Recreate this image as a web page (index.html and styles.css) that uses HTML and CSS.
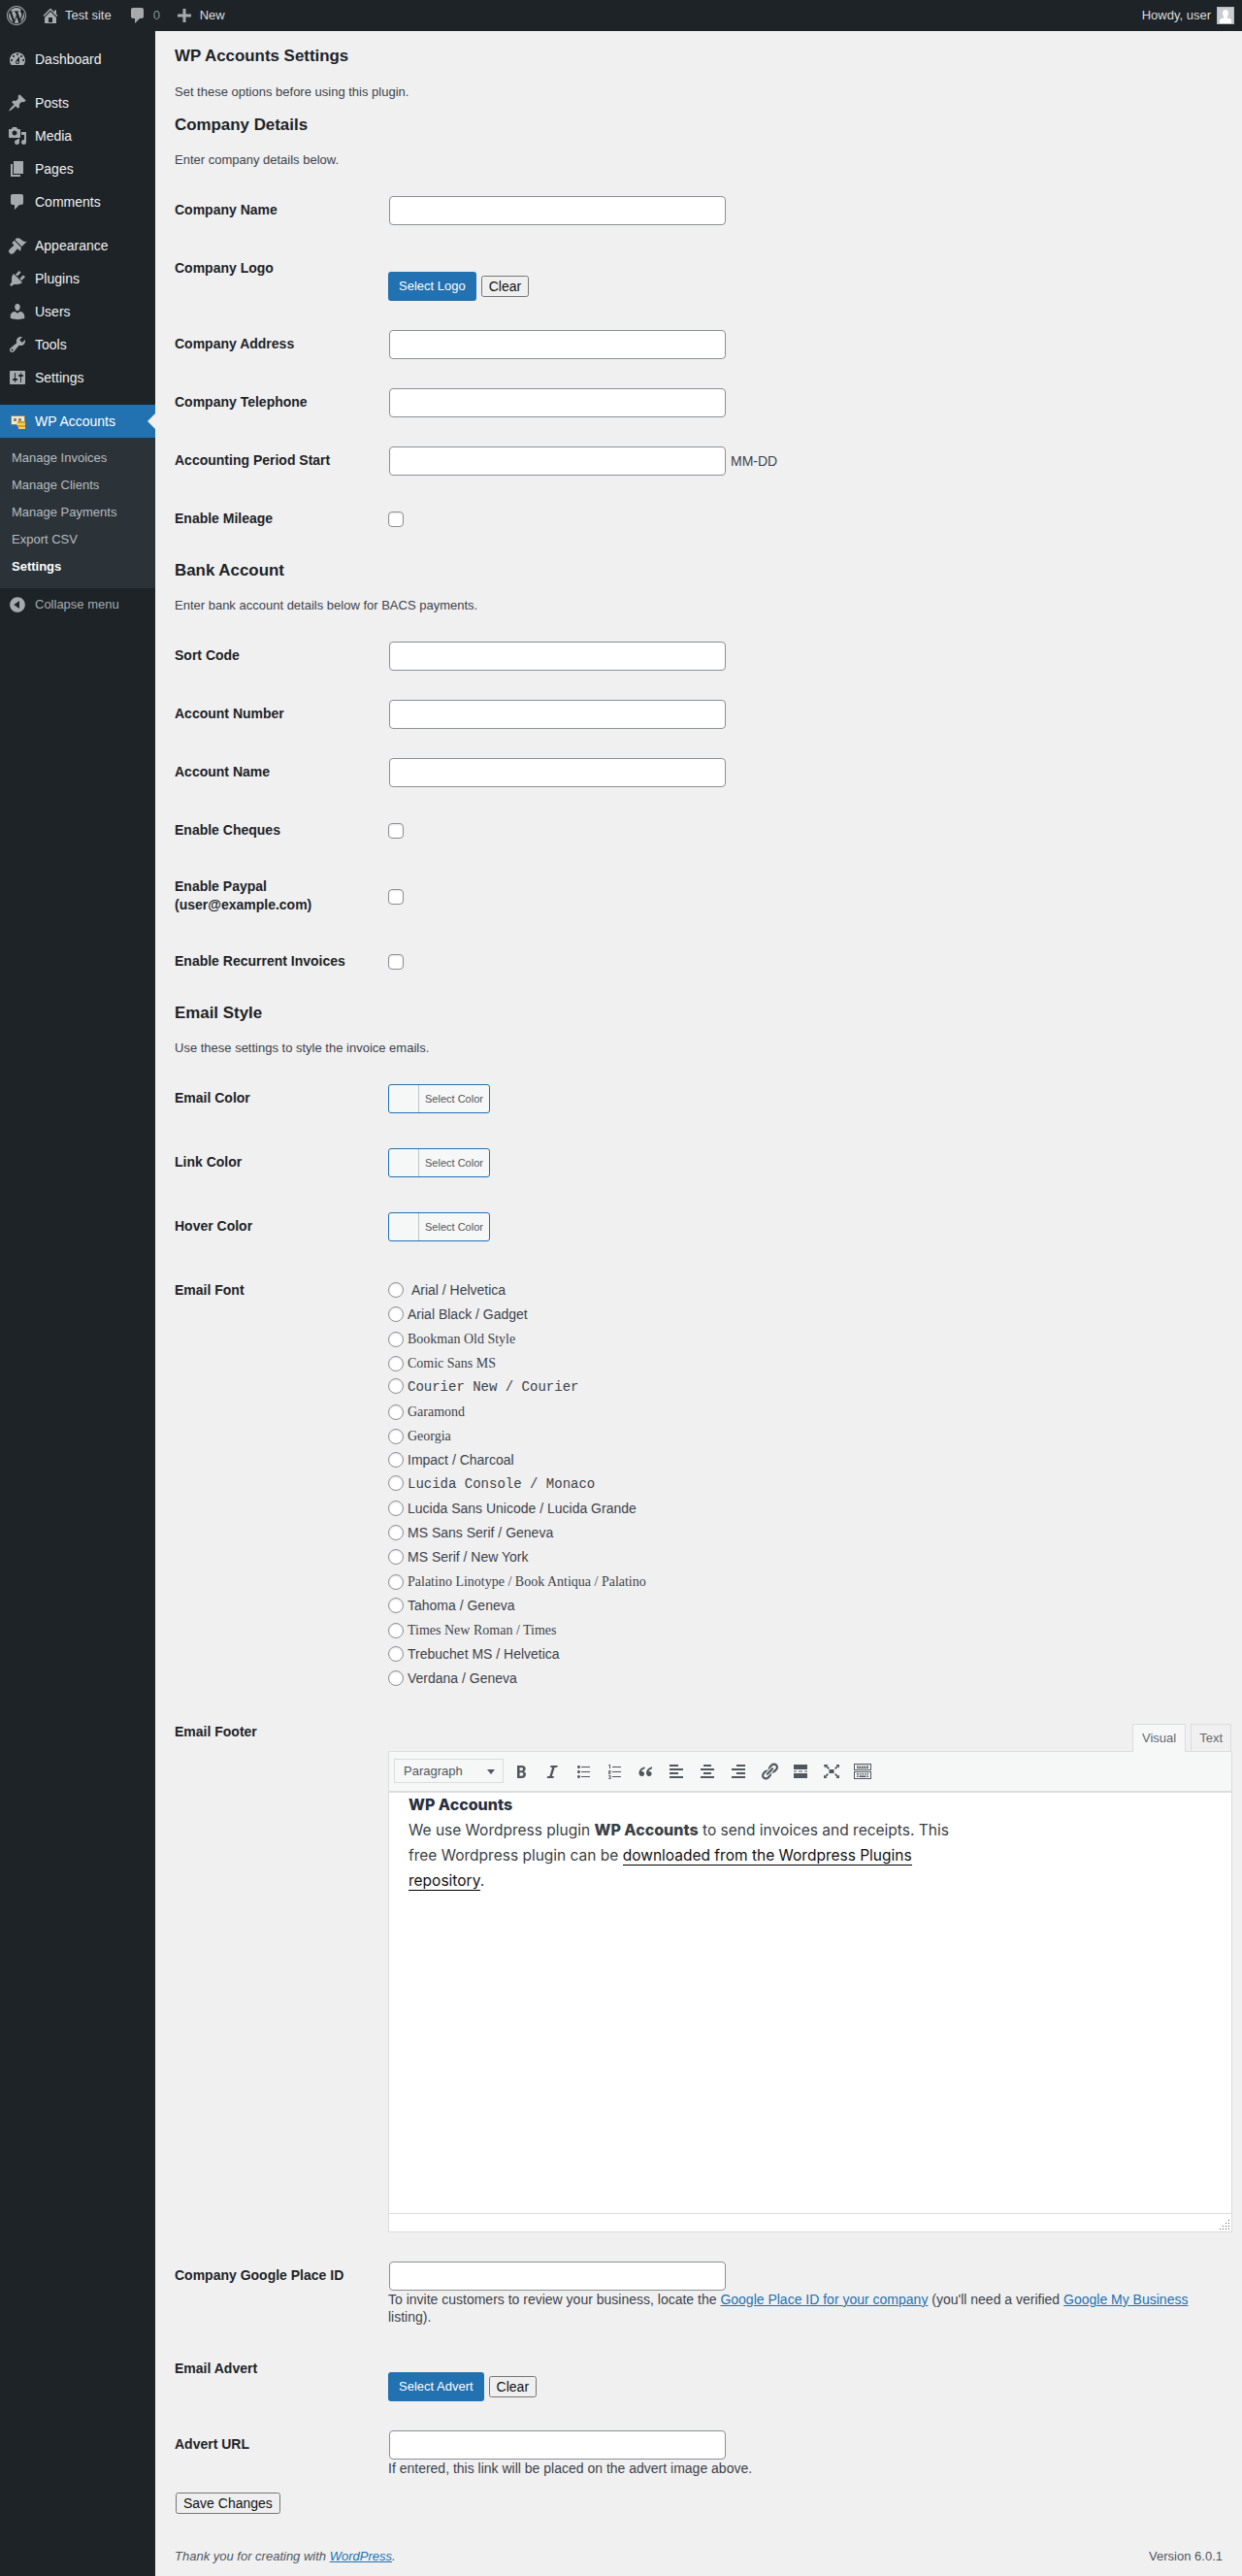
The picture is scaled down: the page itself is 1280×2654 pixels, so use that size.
FILE: index.html
```html
<!DOCTYPE html>
<html lang="en">
<head>
<meta charset="utf-8">
<title>WP Accounts Settings</title>
<link rel="stylesheet" href="styles.css">
</head>
<body>
<header class="topbar">
  <div class="bar-group">
    <span class="bar-logo"><svg class="ico-20" viewBox="0 0 20 20"><path d="M20 10c0-5.52-4.48-10-10-10S0 4.48 0 10s4.48 10 10 10 10-4.48 10-10zM10 1.01c4.97 0 8.99 4.02 8.99 8.99s-4.02 8.99-8.99 8.99S1.01 14.97 1.01 10 5.03 1.01 10 1.01zM8.01 14.82L4.96 6.61c.49-.03 1.05-.08 1.05-.08.43-.05.38-1.01-.06-.99 0 0-1.29.1-2.13.1-.15 0-.33 0-.52-.01 1.44-2.17 3.9-3.6 6.7-3.6 2.09 0 3.99.79 5.41 2.09-.6-.1-1.45.35-1.45 1.36 0 .63.38 1.16.77 1.79.3.53.47 1.18.47 2.13 0 1.29-1.21 4.32-1.21 4.32l-2.62-7.24c.47-.03.72-.16.72-.16.43-.04.38-1.08-.05-1.05 0 0-1.25.11-2.06.11-.76 0-2.04-.11-2.04-.11-.44-.03-.49 1.03-.06 1.05l.81.08 1.13 3.06-1.58 4.77zm6.02 2.15L16.64 10s.67-1.69.39-3.81c.63 1.14.94 2.42.94 3.81 0 2.96-1.56 5.58-3.94 6.97zM2.68 6.77L6.5 17.25c-2.67-1.3-4.47-4.08-4.47-7.25 0-1.16.2-2.23.65-3.23zm7.45 4.53l2.29 6.25c-.75.27-1.57.42-2.42.42-.72 0-1.41-.11-2.06-.3l2.19-6.37z"/></svg></span>
    <span class="bar-item bar-site"><svg class="ico-20" viewBox="0 0 20 20"><path d="M16 8.5l1.53 1.53-1.06 1.06L10 4.62l-6.47 6.47-1.06-1.06L10 2.5l4 4v-2h2v4zm-6-2.46l6 5.99V18H4v-5.97zM12 17v-5H8v5h4z"/></svg>Test site</span>
    <span class="bar-item bar-comments"><svg class="ico-20" viewBox="0 0 20 20"><path d="M5 2h9c1.1 0 2 .9 2 2v7c0 1.1-.9 2-2 2h-2l-5 5v-5H5c-1.1 0-2-.9-2-2V4c0-1.1.9-2 2-2z"/></svg><span class="bar-count">0</span></span>
    <span class="bar-item bar-new"><svg class="ico-20" viewBox="0 0 20 20"><path d="M17 8.5v3h-5.5V17h-3v-5.5H3v-3h5.5V3h3v5.5z"/></svg>New</span>
  </div>
  <div class="bar-user">Howdy, user
    <svg class="avatar" viewBox="0 0 18 18"><rect width="18" height="18" fill="#b4b9be"/><rect x="1" y="1" width="16" height="16" fill="#c9ccd0"/><path fill="#fff" d="M9 3c2 0 3 1.5 3 3.4C12 8.6 10.8 10 10.5 10.8c.3 1 3.5 1.2 4.5 2.6V17H3v-3.6c1-1.4 4.2-1.6 4.5-2.6C7.2 10 6 8.600 6 6.400 6 4.500 7 3 9 3z"/></svg>
  </div>
</header>
<div class="layout">
  <nav class="sidebar">
    <ul class="menu">
      <li class="menu-item"><svg class="ico-20" viewBox="0 0 20 20"><path d="M3.76 16h12.48c1.1-1.37 1.76-3.11 1.76-5 0-4.42-3.58-8-8-8s-8 3.58-8 8c0 1.89.66 3.63 1.76 5zM10 4c.55 0 1 .45 1 1s-.45 1-1 1-1-.45-1-1 .45-1 1-1zM6 6c.55 0 1 .45 1 1s-.45 1-1 1-1-.45-1-1 .45-1 1-1zm8 0c.55 0 1 .45 1 1s-.45 1-1 1-1-.45-1-1 .45-1 1-1zm-5.37 5.55L12 7v6c0 1.1-.9 2-2 2s-2-.9-2-2c0-.57.24-1.08.63-1.45zM4 10c.55 0 1 .45 1 1s-.45 1-1 1-1-.45-1-1 .45-1 1-1zm12 0c.55 0 1 .45 1 1s-.45 1-1 1-1-.45-1-1 .45-1 1-1zm-5 3c0-.55-.45-1-1-1s-1 .45-1 1 .45 1 1 1 1-.45 1-1z"/></svg>Dashboard</li>
      <li class="menu-sep"></li>
      <li class="menu-item"><svg class="ico-20" viewBox="0 0 20 20"><path d="M10.44 3.02l1.82-1.82 6.36 6.35-1.83 1.82c-1.05-.68-2.48-.57-3.41.36l-.75.75c-.92.93-1.04 2.35-.35 3.41l-1.83 1.82-2.41-2.41-2.8 2.79c-.42.42-3.38 2.71-3.8 2.29s1.86-3.39 2.28-3.81l2.79-2.79L4.1 9.36l1.83-1.82c1.05.69 2.48.57 3.4-.36l.75-.75c.93-.92 1.05-2.35.36-3.41z"/></svg>Posts</li>
      <li class="menu-item"><svg class="ico-20" viewBox="0 0 20 20"><path d="M13 11V4c0-.55-.45-1-1-1h-1.67L9 1H5L3.67 3H2c-.55 0-1 .45-1 1v7c0 .55.45 1 1 1h10c.55 0 1-.45 1-1zM7 4.500c1.380 0 2.500 1.120 2.500 2.500S8.380 9.500 7 9.500 4.500 8.380 4.500 7 5.620 4.500 7 4.500zM14 6h5v10.500c0 1.380-1.120 2.500-2.500 2.500S14 17.880 14 16.500s1.120-2.500 2.500-2.500c.17 0 .34.02.5.05V9h-3V6zm-4 8.050V13h2v3.500c0 1.380-1.120 2.500-2.500 2.500S7 17.880 7 16.500 8.120 14 9.500 14c.17 0 .34.02.5.05z"/></svg>Media</li>
      <li class="menu-item"><svg class="ico-20" viewBox="0 0 20 20"><path d="M6 15V2h10v13H6zm-1 1h8v2H3V5h2v11z"/></svg>Pages</li>
      <li class="menu-item"><svg class="ico-20" viewBox="0 0 20 20"><path d="M5 2h9c1.100 0 2 .9 2 2v7c0 1.100-.9 2-2 2h-2l-5 5v-5H5c-1.100 0-2-.9-2-2V4c0-1.100.9-2 2-2z"/></svg>Comments</li>
      <li class="menu-sep"></li>
      <li class="menu-item"><svg class="ico-20" viewBox="0 0 20 20"><path d="M14.480 11.060L7.410 3.990l1.500-1.500c.5-.56 2.300-.47 3.510.32 1.210.8 1.430 1.280 2.910 2.100 1.180.64 2.450 1.260 4.450.85zm-.71.71L6.700 4.700 4.930 6.470c-.39.39-.39 1.020 0 1.410l1.060 1.060c.39.39.39 1.030 0 1.420-.6.6-1.430 1.110-2.210 1.690-.35.26-.7.53-1.010.84-1.340 1.340-2.370 3.060-1.450 3.990.27.27.54.53.8.8s.53.54.8.8c.93.93 2.650-.1 3.990-1.430.31-.31.58-.66.84-1.010.58-.78 1.090-1.610 1.690-2.210.39-.39 1.030-.39 1.420 0l1.060 1.060c.39.39 1.020.39 1.410 0z"/></svg>Appearance</li>
      <li class="menu-item"><svg class="ico-20" viewBox="0 0 20 20"><path d="M13.110 4.360L9.870 7.600 8 5.730l3.240-3.240c.35-.34 1.050-.2 1.560.32.52.51.66 1.210.31 1.550zm-8 1.770l.91-1.120 9.010 9.010-1.190.84c-.71.71-2.630 1.160-3.820 1.160H6.140L4.900 17.260c-.59.59-1.540.59-2.120 0-.59-.58-.59-1.530 0-2.120l1.240-1.240v-3.880c0-1.130.4-3.190 1.090-3.890zm7.260 3.970l3.240-3.240c.34-.35 1.040-.21 1.550.31.52.51.66 1.210.31 1.550l-3.240 3.250z"/></svg>Plugins</li>
      <li class="menu-item"><svg class="ico-20" viewBox="0 0 20 20"><path d="M10 9.250c-2.270 0-2.730-3.440-2.730-3.440C7 4.020 7.820 2 9.970 2c2.160 0 2.980 2.020 2.710 3.810 0 0-.41 3.440-2.680 3.440zm0 2.570L12.720 10c2.390 0 4.520 2.330 4.520 4.530v2.490s-3.650 1.130-7.240 1.130c-3.650 0-7.240-1.130-7.240-1.130v-2.490c0-2.250 1.940-4.480 4.470-4.480z"/></svg>Users</li>
      <li class="menu-item"><svg class="ico-20" viewBox="0 0 20 20"><path d="M16.680 9.770c-1.340 1.340-3.300 1.670-4.950.99l-5.410 6.520c-.99.99-2.590.99-3.580 0s-.99-2.590 0-3.570l6.520-5.420c-.68-1.650-.35-3.610.99-4.950 1.280-1.280 3.120-1.620 4.720-1.060l-2.890 2.890 2.820 2.820 2.860-2.870c.53 1.580.18 3.390-1.080 4.650zM3.810 16.210c.4.39 1.040.39 1.430 0 .4-.4.4-1.040 0-1.430-.39-.4-1.030-.4-1.430 0-.39.39-.39 1.030 0 1.430z"/></svg>Tools</li>
      <li class="menu-item"><svg class="ico-20" viewBox="0 0 20 20"><path d="M18 16V4c0-.55-.45-1-1-1H3c-.55 0-1 .45-1 1v12c0 .55.45 1 1 1h14c.55 0 1-.45 1-1zM8 11h1c.55 0 1 .45 1 1s-.45 1-1 1H8v1.500c0 .28-.22.5-.5.5s-.5-.22-.5-.5V13H6c-.55 0-1-.45-1-1s.45-1 1-1h1V5.500c0-.28.22-.5.5-.5s.5.22.5.5V11zm5-2h-1c-.55 0-1-.45-1-1s.45-1 1-1h1V5.500c0-.28.22-.5.5-.5s.5.22.5.5V7h1c.55 0 1 .45 1 1s-.45 1-1 1h-1v5.500c0 .28-.22.5-.5.5s-.5-.22-.5-.5V9z"/></svg>Settings</li>
      <li class="menu-sep"></li>
      <li class="menu-item menu-active">
        <svg class="ico-money" viewBox="0 0 15 14"><rect width="15" height="10" fill="#8b8468"/><rect x="1" y="1" width="13" height="8" fill="#efe9d6"/><rect x="3" y="3" width="3" height="3" fill="#8b8468"/><rect x="8" y="3" width="3" height="3" fill="#8b8468"/><rect x="7" y="6" width="8" height="2" fill="#d99f2b"/><rect x="6" y="8" width="9" height="2" fill="#f4cb63"/><rect x="7" y="10" width="8" height="2" fill="#d99f2b"/><rect x="8" y="12" width="7" height="2" fill="#f4cb63"/></svg>WP Accounts
        <span class="menu-arrow"></span>
      </li>
      <li class="submenu">
        <a class="sub-item">Manage Invoices</a>
        <a class="sub-item">Manage Clients</a>
        <a class="sub-item">Manage Payments</a>
        <a class="sub-item">Export CSV</a>
        <a class="sub-item sub-current">Settings</a>
      </li>
      <li class="menu-collapse"><svg class="ico-20" viewBox="0 0 20 20"><path d="M10 2.160c4.330 0 7.840 3.510 7.840 7.840s-3.510 7.840-7.840 7.840S2.160 14.330 2.160 10 5.710 2.160 10 2.160zm2 11.720V6.120L6.180 9.970z"/></svg>Collapse menu</li>
    </ul>
  </nav>
  <main class="content">
    <h2 class="section-title">WP Accounts Settings</h2>
    <p class="section-note">Set these options before using this plugin.</p>

    <h2 class="section-title">Company Details</h2>
    <p class="section-note">Enter company details below.</p>
    <table class="form-table">
      <tr><th>Company Name</th><td><input class="text-input" type="text"></td></tr>
      <tr><th>Company Logo</th><td><div class="media-row"><span class="btn-primary">Select Logo</span><button class="btn-plain" type="button">Clear</button></div></td></tr>
      <tr><th>Company Address</th><td><input class="text-input" type="text"></td></tr>
      <tr><th>Company Telephone</th><td><input class="text-input" type="text"></td></tr>
      <tr><th>Accounting Period Start</th><td><div class="input-suffix"><input class="text-input" type="text"><span>MM-DD</span></div></td></tr>
      <tr><th>Enable Mileage</th><td class="check-cell"><input class="check" type="checkbox"></td></tr>
    </table>

    <h2 class="section-title">Bank Account</h2>
    <p class="section-note">Enter bank account details below for BACS payments.</p>
    <table class="form-table">
      <tr><th>Sort Code</th><td><input class="text-input" type="text"></td></tr>
      <tr><th>Account Number</th><td><input class="text-input" type="text"></td></tr>
      <tr><th>Account Name</th><td><input class="text-input" type="text"></td></tr>
      <tr><th>Enable Cheques</th><td class="check-cell"><input class="check" type="checkbox"></td></tr>
      <tr><th>Enable Paypal (user@example.com)</th><td class="check-cell check-tall"><input class="check" type="checkbox"></td></tr>
      <tr><th>Enable Recurrent Invoices</th><td class="check-cell"><input class="check" type="checkbox"></td></tr>
    </table>

    <h2 class="section-title">Email Style</h2>
    <p class="section-note">Use these settings to style the invoice emails.</p>
    <table class="form-table">
      <tr><th>Email Color</th><td><div class="color-btn"><span class="color-swatch"></span><span class="color-label">Select Color</span></div></td></tr>
      <tr><th>Link Color</th><td><div class="color-btn"><span class="color-swatch"></span><span class="color-label">Select Color</span></div></td></tr>
      <tr><th>Hover Color</th><td><div class="color-btn"><span class="color-swatch"></span><span class="color-label">Select Color</span></div></td></tr>
      <tr><th>Email Font</th><td class="font-cell">
        <label class="font-opt f-sans"><input class="radio" type="radio" name="font">&nbsp;Arial / Helvetica</label>
        <label class="font-opt f-sans"><input class="radio" type="radio" name="font">Arial Black / Gadget</label>
        <label class="font-opt f-serif"><input class="radio" type="radio" name="font">Bookman Old Style</label>
        <label class="font-opt f-serif"><input class="radio" type="radio" name="font">Comic Sans MS</label>
        <label class="font-opt f-mono"><input class="radio" type="radio" name="font">Courier New / Courier</label>
        <label class="font-opt f-serif"><input class="radio" type="radio" name="font">Garamond</label>
        <label class="font-opt f-serif"><input class="radio" type="radio" name="font">Georgia</label>
        <label class="font-opt f-sans"><input class="radio" type="radio" name="font">Impact / Charcoal</label>
        <label class="font-opt f-mono"><input class="radio" type="radio" name="font">Lucida Console / Monaco</label>
        <label class="font-opt f-sans"><input class="radio" type="radio" name="font">Lucida Sans Unicode / Lucida Grande</label>
        <label class="font-opt f-sans"><input class="radio" type="radio" name="font">MS Sans Serif / Geneva</label>
        <label class="font-opt f-sans"><input class="radio" type="radio" name="font">MS Serif / New York</label>
        <label class="font-opt f-serif"><input class="radio" type="radio" name="font">Palatino Linotype / Book Antiqua / Palatino</label>
        <label class="font-opt f-sans"><input class="radio" type="radio" name="font">Tahoma / Geneva</label>
        <label class="font-opt f-serif"><input class="radio" type="radio" name="font">Times New Roman / Times</label>
        <label class="font-opt f-sans"><input class="radio" type="radio" name="font">Trebuchet MS / Helvetica</label>
        <label class="font-opt f-sans"><input class="radio" type="radio" name="font">Verdana / Geneva</label>
      </td></tr>
      <tr><th>Email Footer</th><td class="editor-cell">
        <div class="editor">
          <div class="editor-tabs"><span class="tab tab-on">Visual</span><span class="tab">Text</span></div>
          <div class="toolbar">
            <div class="format-select"><span>Paragraph</span><i class="select-caret"></i></div>
            <div class="tools">
              <svg class="ico-20" viewBox="0 0 20 20"><path d="M6 4v13h4.540c1.370 0 2.460-.33 3.260-1 .8-.66 1.200-1.580 1.200-2.770 0-.84-.17-1.510-.51-2.010s-.9-.85-1.670-1.030v-.09c.57-.1 1.020-.4 1.360-.9s.51-1.130.51-1.910c0-1.140-.39-1.980-1.170-2.500C12.750 4.260 11.500 4 9.780 4H6zm2.570 5.150V6.260h1.360c.73 0 1.270.11 1.610.32.34.22.51.58.51 1.070 0 .54-.16.92-.47 1.150s-.82.35-1.510.35h-1.500zm0 2.190h1.600c1.440 0 2.160.53 2.160 1.610 0 .6-.17 1.050-.51 1.340s-.86.44-1.570.44H8.570v-3.390z"/></svg>
              <svg class="ico-20" viewBox="0 0 20 20"><path d="M14.780 6h-2.130l-2.800 9h2.120l-.62 2H4.600l.62-2h2.140l2.800-9H8.010l.62-2h7.550z"/></svg>
              <svg class="ico-20" viewBox="0 0 20 20"><path d="M5.500 7C4.670 7 4 6.330 4 5.500 4 4.680 4.670 4 5.500 4 6.320 4 7 4.680 7 5.500 7 6.330 6.320 7 5.500 7zM8 5h9v1H8V5zm-2.500 7c-.83 0-1.500-.67-1.500-1.500C4 9.680 4.670 9 5.500 9c.82 0 1.500.68 1.500 1.500 0 .83-.68 1.500-1.500 1.500zM8 10h9v1H8v-1zm-2.500 7c-.83 0-1.500-.67-1.500-1.500 0-.82.67-1.500 1.500-1.500.82 0 1.500.68 1.500 1.500 0 .83-.68 1.500-1.500 1.500zM8 15h9v1H8v-1z"/></svg>
              <svg class="ico-20" viewBox="0 0 20 20"><path d="M8 5h9v1H8V5zm0 5h9v1H8v-1zm0 5h9v1H8v-1zM5 3h1v4H5V4H4V3.500zM4 9h2.500v2.500H5V12h1.500v.7H4v-2.200h1.500V9.700H4zm0 5h2.500v4H4v-.7h1.500v-1H4.500v-.6h1v-1H4z"/></svg>
              <svg class="ico-20" viewBox="0 0 20 20"><path d="M9.500 5.200C6.300 6.100 3.500 8.400 3.500 11.800c0 1.900 1.200 3.200 2.900 3.200 1.500 0 2.700-1.100 2.700-2.600 0-1.400-1-2.500-2.500-2.500-.3 0-.5 0-.7.1.300-1.200 1.700-2.200 3.600-2.800zM17 5.200c-3.200.9-6 3.200-6 6.600 0 1.900 1.200 3.200 2.900 3.200 1.500 0 2.700-1.100 2.700-2.600 0-1.400-1-2.500-2.500-2.500-.3 0-.5 0-.7.1.3-1.200 1.700-2.200 3.600-2.800z"/></svg>
              <svg class="ico-20" viewBox="0 0 20 20"><path d="M12 5V3H3v2h9zm5 4V7H3v2h14zm-5 4v-2H3v2h9zm5 4v-2H3v2h14z"/></svg>
              <svg class="ico-20" viewBox="0 0 20 20"><path d="M14 5V3H6v2h8zm3 4V7H3v2h14zm-3 4v-2H6v2h8zm3 4v-2H3v2h14z"/></svg>
              <svg class="ico-20" viewBox="0 0 20 20"><path d="M17 5V3H8v2h9zm0 4V7H3v2h14zm0 4v-2H8v2h9zm0 4v-2H3v2h14z"/></svg>
              <svg class="ico-20" viewBox="0 0 20 20"><path d="M17.740 2.760c1.680 1.690 1.680 4.410 0 6.100l-1.530 1.520c-1.120 1.120-2.700 1.470-4.140 1.090l2.620-2.610.76-.77.76-.76c.84-.84.84-2.200 0-3.040-.84-.85-2.200-.85-3.040 0l-.77.76-3.380 3.380c-.37-1.440-.02-3.020 1.100-4.140l1.520-1.530c1.690-1.680 4.420-1.680 6.100 0zM8.590 13.430l5.340-5.340c.42-.42.42-1.100 0-1.520-.44-.43-1.130-.39-1.530 0l-5.330 5.340c-.42.42-.42 1.100 0 1.520.44.43 1.130.39 1.520 0zm-.76 2.290l4.140-4.150c.38 1.440.03 3.020-1.090 4.140l-1.520 1.530c-1.690 1.680-4.410 1.680-6.100 0-1.680-1.680-1.680-4.420 0-6.100l1.530-1.520c1.120-1.120 2.700-1.470 4.140-1.100l-4.140 4.150c-.85.84-.85 2.200 0 3.050.84.84 2.200.84 3.040 0z"/></svg>
              <svg class="ico-20" viewBox="0 0 20 20"><path d="M3 3h14v5H3zM3 12h14v5H3zM3 9.500h3v1H3zM8 9.500h4v1H8zM14 9.500h3v1h-3z"/></svg>
              <svg class="ico-20" viewBox="0 0 20 20"><path d="M2 3h4.500L5.300 4.200 8 6.700 6.700 8 4.200 5.300 3 6.500zM18 3v3.500l-1.200-1.200L14.300 8 13 6.700l2.700-2.500L14.500 3zM2 17v-3.500l1.200 1.200L5.700 12 7 13.300l-2.700 2.500L5.500 17zM18 17h-3.500l1.200-1.200L13 13.300l1.300-1.300 2.500 2.700 1.200-1.200zM7.500 8h5v4h-5z"/></svg>
              <svg class="ico-20" viewBox="0 0 20 20"><path fill-rule="evenodd" d="M1 2h18v7H1zm1 1v5h16V3zM1 10h18v8H1zm1 1v6h16v-6zM4 4h1.500v1.500H4zM6.500 4H8v1.500H6.500zM9 4h1.500v1.500H9zM11.500 4H13v1.500h-1.500zM14 4h2v1.500h-2zM4 6h12v1H4zM4 12h2v1.500H4zM7 12h1.500v1.500H7zM9.500 12H11v1.500H9.500zM12 12h1.500v1.500H12zM14.500 12H16v1.500h-1.500zM4 14.500h1.500V16H4zM6.500 14.500h7V16h-7zM14.500 14.500H16V16h-1.500z"/></svg>
            </div>
          </div>
          <div class="editor-body">
            <div class="doc-title">WP Accounts</div>
            <div class="doc-text">We use Wordpress plugin <b>WP Accounts</b> to send invoices and receipts. This<br>free Wordpress plugin can be <a class="doc-link">downloaded from the Wordpress Plugins<br>repository</a>.</div>
          </div>
          <div class="editor-status"><svg class="grip" viewBox="0 0 10 10"><path fill="#50575e" d="M9 0h1v1H9zM6 3h1v1H6zM9 3h1v1H9zM3 6h1v1H3zM6 6h1v1H6zM9 6h1v1H9zM0 9h1v1H0zM3 9h1v1H3zM6 9h1v1H6zM9 9h1v1H9z"/></svg></div>
        </div>
      </td></tr>
    </table>
    <table class="form-table">
      <tr><th>Company Google Place ID</th><td><input class="text-input block-input" type="text">
        <div class="help">To invite customers to review your business, locate the <a class="link">Google Place ID for your company</a> (you'll need a verified <a class="link">Google My Business</a> listing).</div></td></tr>
      <tr><th>Email Advert</th><td><div class="media-row"><span class="btn-primary">Select Advert</span><button class="btn-plain" type="button">Clear</button></div></td></tr>
      <tr><th>Advert URL</th><td><input class="text-input block-input" type="text">
        <div class="help">If entered, this link will be placed on the advert image above.</div></td></tr>
    </table>
    <button class="btn-plain btn-save" type="button">Save Changes</button>
    <footer class="page-footer">
      <span class="thanks">Thank you for creating with <a class="link">WordPress</a>.</span>
      <span class="version">Version 6.0.1</span>
    </footer>
  </main>
</div>
</body>
</html>
```
FILE: styles.css
```css
* { box-sizing: border-box; }
html, body { margin: 0; padding: 0; }
body {
  background: #f0f0f1;
  color: #3c434a;
  font-family: "Liberation Sans", Arial, sans-serif;
  font-size: 13px;
  line-height: 1.4;
}
ul { list-style: none; margin: 0; padding: 0; }
.ico-20 { width: 20px; height: 20px; fill: currentColor; flex: none; }

/* Top bar */
.topbar {
  height: 32px;
  background: #1d2327;
  color: #f0f0f1;
  display: flex;
  justify-content: space-between;
  align-items: center;
  line-height: 32px;
}
.bar-group { display: flex; align-items: center; }
.bar-logo { display: flex; color: #a7aaad; padding: 0 7px; width: 34px; }
.bar-item { display: flex; align-items: center; color: #dcdcde; }
.bar-item .ico-20 { color: #a7aaad; }
.bar-site { margin-left: 8px; gap: 5px; }
.bar-comments { margin-left: 17px; gap: 6px; }
.bar-count { color: #8a8f94; }
.bar-new { margin-left: 15.3px; gap: 5.5px; }
.bar-user { display: flex; align-items: center; gap: 6px; padding-right: 8px; color: #dcdcde; }
.avatar { width: 18px; height: 18px; }

/* Layout */
.layout { display: flex; min-height: calc(100vh - 32px); }
.sidebar { width: 160px; flex: none; background: #1d2327; padding-top: 12px; }
.menu-item {
  position: relative;
  height: 34px;
  display: flex;
  align-items: center;
  gap: 8px;
  padding: 2px 0 0 8px;
  color: #f0f0f1;
  font-size: 14px;
}
.menu-item .ico-20 { color: #a7aaad; margin-top: -2px; }
.menu-sep { height: 11px; }
.menu-active { background: #2271b1; color: #fff; }
.ico-money { width: 15px; height: 14px; margin: -1px 2px 0 3px; flex: none; }
.menu-arrow {
  position: absolute;
  right: 0;
  top: 50%;
  margin-top: -8px;
  border: 8px solid transparent;
  border-right-color: #f0f0f1;
  border-left-width: 0;
}
.submenu { background: #2c3338; padding: 7px 0 8px; }
.sub-item {
  display: block;
  height: 28px;
  line-height: 28px;
  padding-left: 12px;
  font-size: 13px;
  color: rgba(240, 246, 252, .7);
}
.sub-current { color: #fff; font-weight: 600; }
.menu-collapse {
  height: 34px;
  display: flex;
  align-items: center;
  gap: 8px;
  padding-left: 8px;
  color: #a7aaad;
  font-size: 13px;
}

/* Content */
.content { flex: 1; min-width: 0; padding: 14.5px 0 0 20px; }
.section-title {
  margin: 14px 0 15px;
  font-size: 16.9px;
  font-weight: 600;
  line-height: 22px;
  color: #1d2327;
}
.content > .section-title:first-child { margin: 0 0 16px; }
.section-note { margin: 0 0 12.5px; font-size: 13px; line-height: 19.5px; }
.form-table { width: 1100px; border-collapse: collapse; }
.form-table th {
  width: 210px;
  padding: 20px 10px 20px 0;
  text-align: left;
  vertical-align: top;
  font-size: 14px;
  font-weight: 600;
  line-height: 1.3;
  color: #1d2327;
}
.form-table td {
  padding: 15px 10px;
  font-size: 14px;
  line-height: 1.3;
  vertical-align: top;
}
.text-input {
  width: 347px;
  height: 30px;
  margin: 0 1px;
  padding: 0 8px;
  border: 1px solid #8c8f94;
  border-radius: 4px;
  background: #fff;
  vertical-align: top;
}
.block-input { display: block; }
.input-suffix { display: flex; align-items: center; gap: 4px; }
.help { color: #3c434a; }
.link { color: #2271b1; text-decoration: underline; }
.media-row { display: flex; align-items: center; gap: 5px; margin-top: 18px; }
.btn-primary {
  height: 30px;
  padding: 0 11px;
  line-height: 30px;
  font-size: 13px;
  color: #fff;
  background: #2271b1;
  border-radius: 3px;
}
.btn-plain {
  font-family: "Liberation Sans", Arial, sans-serif;
  font-size: 14px;
  line-height: 16px;
  height: 22px;
  color: #111;
}
.btn-save { display: block; margin-left: 1px; }
.form-table .check-cell { padding-top: 22px; }
.form-table .check-tall { padding-top: 32px; }
.check, .radio {
  appearance: none;
  width: 16px;
  height: 16px;
  padding: 0;
  background: #fff;
  border: 1px solid #8c8f94;
  box-shadow: inset 0 1px 2px rgba(0, 0, 0, .1);
}
.check { display: block; margin: 0; border-radius: 4px; }
.radio {
  display: inline-block;
  margin: -2px 4px 0 0;
  vertical-align: middle;
  border-radius: 50%;
}
.color-btn {
  display: flex;
  width: 105px;
  height: 30px;
  margin-bottom: 6px;
  border: 1px solid #2271b1;
  border-radius: 3px;
  background: #f6f7f7;
  overflow: hidden;
}
.color-swatch { width: 31px; border-right: 1px solid #c3c4c7; }
.color-label { padding-left: 6px; font-size: 11px; line-height: 29px; color: #50575e; }
.form-table .font-cell { padding-top: 17px; padding-bottom: 13px; }
.font-opt { display: block; line-height: 25px; height: 25px; font-size: 14px; }
.f-sans { font-family: "Liberation Sans", Arial, sans-serif; }
.f-serif { font-family: "Liberation Serif", "Times New Roman", serif; }
.f-mono { font-family: "Liberation Mono", "Courier New", monospace; }

/* Editor */
.form-table .editor-cell { padding: 21px 0 15px 10px; }
.editor { width: 870px; }
.editor-tabs { display: flex; justify-content: flex-end; gap: 5px; height: 28px; padding-right: 1px; }
.tab {
  height: 28px;
  padding: 0 8px;
  border: 1px solid #dcdcde;
  border-bottom: 0;
  font-size: 13px;
  line-height: 27px;
  color: #646970;
}
.tab-on { background: #f6f7f7; height: 29px; position: relative; z-index: 1; padding: 0 9px; }
.toolbar {
  height: 43px;
  display: flex;
  align-items: center;
  padding-left: 5px;
  background: #f6f7f7;
  border: 1px solid #dcdcde;
  border-bottom: 2px solid #dcdcde;
}
.format-select {
  position: relative;
  width: 113px;
  height: 25px;
  padding-left: 9px;
  background: #f6f7f7;
  border: 1px solid #dcdcde;
  font-size: 13px;
  line-height: 23px;
  color: #50575e;
}
.select-caret {
  position: absolute;
  right: 8px;
  top: 10px;
  border: 4px solid transparent;
  border-top: 5px solid #50575e;
  border-bottom: 0;
}
.tools { display: flex; gap: 12px; margin-left: 8px; color: #50575e; }
.editor-body {
  height: 433px;
  padding-left: 20px;
  background: #fff;
  border-left: 1px solid #dcdcde;
  border-right: 1px solid #dcdcde;
  font-family: Inter, "Liberation Sans", sans-serif;
  font-size: 15.5px;
  line-height: 26px;
  color: #3a3f45;
}
.doc-title { font-size: 16px; font-weight: 800; line-height: 25px; color: #28303d; }
.doc-text b { font-size: 16px; font-weight: 800; }
.doc-link { color: #111; border-bottom: 1px solid #000; }
.editor-status {
  height: 20px;
  display: flex;
  justify-content: flex-end;
  align-items: flex-end;
  padding: 0 2px 2px 0;
  background: #fff;
  border: 1px solid #dcdcde;
}
.grip { width: 10px; height: 10px; }

/* Footer */
.page-footer {
  display: flex;
  justify-content: space-between;
  margin-top: 34px;
  padding: 0 20px 10px 0;
  font-size: 13px;
  line-height: 19.5px;
  color: #50575e;
}
.thanks { font-style: italic; }
```
